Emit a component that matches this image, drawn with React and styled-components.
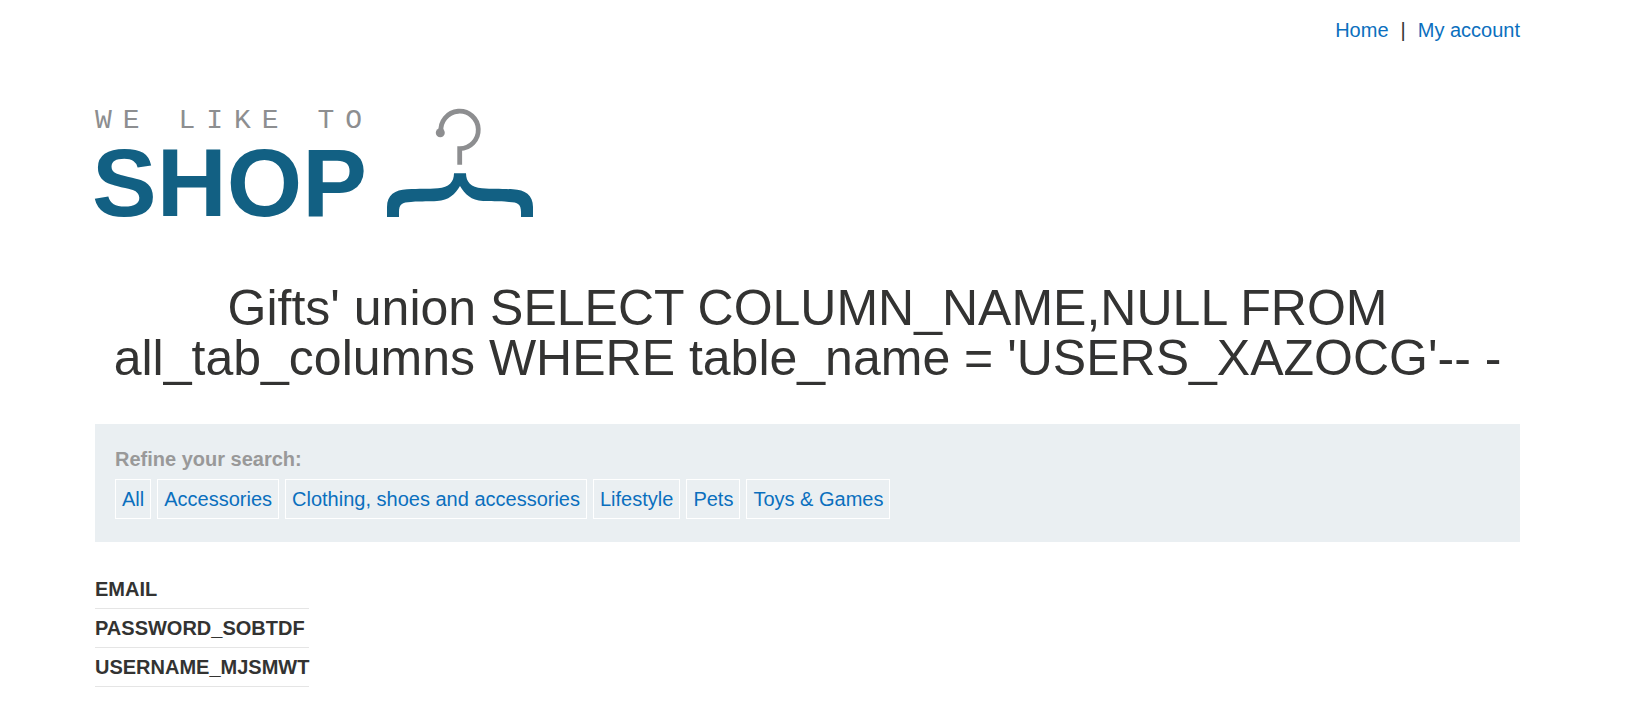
import React from "react";
import styled, { createGlobalStyle } from "styled-components";

const GlobalStyle = createGlobalStyle`
  *, *::before, *::after { box-sizing: border-box; }
  body {
    margin: 0;
    background: #fff;
    color: #333332;
    font-family: "Liberation Sans", Arial, sans-serif;
    font-size: 20px;
    line-height: 24px;
  }
`;

const Page = styled.div`
  padding: 18px 118px 16px 95px;
`;

const Link = styled.a`
  color: #0b6fbe;
  text-decoration: none;
`;

const TopNav = styled.nav`
  display: flex;
  justify-content: flex-end;
  gap: 12px;
`;

const Logo = styled.div`
  display: flex;
  align-items: flex-start;
  gap: 14px;
  margin-top: 65px;
`;

const LogoText = styled.div`
  display: flex;
  flex-direction: column;
  gap: 8px;
`;

const Tagline = styled.span`
  color: #8d8e90;
  font-family: "Liberation Mono", monospace;
  font-size: 28px;
  letter-spacing: 11px;
  line-height: 28px;
`;

const Wordmark = styled.span`
  margin-left: -3px;
  color: #126083;
  font-size: 97px;
  font-weight: 700;
  line-height: 80px;
`;

const Hanger = styled.svg`
  display: block;
  flex: none;
  width: 146px;
  height: 116px;
`;

const Title = styled.h1`
  margin: 60px 0 41px;
  font-size: 50px;
  font-weight: 400;
  line-height: 50px;
  text-align: center;
`;

const Filters = styled.section`
  padding: 23px 20px;
  background: #eaeff2;
`;

const FiltersLabel = styled.h2`
  margin: 0 0 8px;
  color: #999;
  font-size: 20px;
  font-weight: 700;
  line-height: 24px;
`;

const FilterList = styled.div`
  display: flex;
  flex-wrap: wrap;
  gap: 6px;
`;

const Filter = styled(Link)`
  padding: 7px 6px;
  border: 1px solid #fff;
`;

const Results = styled.table`
  margin-top: 28px;
  border-collapse: separate;
  border-spacing: 0;
`;

const Result = styled.th`
  height: 39px;
  padding: 0;
  border-bottom: 1px solid #e5e5e5;
  text-align: left;
`;

const categories = [
  "All",
  "Accessories",
  "Clothing, shoes and accessories",
  "Lifestyle",
  "Pets",
  "Toys & Games",
];

const results = ["EMAIL", "PASSWORD_SOBTDF", "USERNAME_MJSMWT"];

export default function App() {
  return (
    <Page>
      <GlobalStyle />
      <header>
        <TopNav>
          <Link href="#home">Home</Link>
          <span>|</span>
          <Link href="#account">My account</Link>
        </TopNav>
        <Logo>
          <LogoText>
            <Tagline>WE LIKE TO</Tagline>
            <Wordmark>SHOP</Wordmark>
          </LogoText>
          <Hanger viewBox="292 -1 146 116" aria-hidden="true">
            <path
              d="M346 24 A18.7 18.7 0 1 1 364.7 40.6 V56.7"
              fill="none"
              stroke="#8d8e90"
              strokeWidth="4.8"
            />
            <circle cx="345.3" cy="24.7" r="4.5" fill="#8d8e90" />
            <path
              d="M292 109 V99 C292 87 300 81.8 312 81.3 C325 80.5 332 81 343 80.2 C354 79.5 359 74 359 65.3 H371 C371 74 376 79.5 387 80.2 C398 81 405 80.5 418 81.3 C430 81.8 438 87 438 99 V109 H426 V104 C426 96 423 94.2 414 93.9 C402 93.3 396 93.5 388 93.1 C376 92.5 370 86 365 78 C360 86 354 92.5 342 93.1 C334 93.5 328 93.3 316 93.9 C307 94.2 304 96 304 104 V109 Z"
              fill="#126083"
            />
          </Hanger>
        </Logo>
      </header>
      <main>
        <Title>
          Gifts' union SELECT COLUMN_NAME,NULL FROM all_tab_columns WHERE
          table_name = 'USERS_XAZOCG'-- -
        </Title>
        <Filters>
          <FiltersLabel>Refine your search:</FiltersLabel>
          <FilterList>
            {categories.map((name) => (
              <Filter key={name} href="#filter">{name}</Filter>
            ))}
          </FilterList>
        </Filters>
        <Results>
          <tbody>
            {results.map((name) => (
              <tr key={name}>
                <Result scope="row">{name}</Result>
              </tr>
            ))}
          </tbody>
        </Results>
      </main>
    </Page>
  );
}
